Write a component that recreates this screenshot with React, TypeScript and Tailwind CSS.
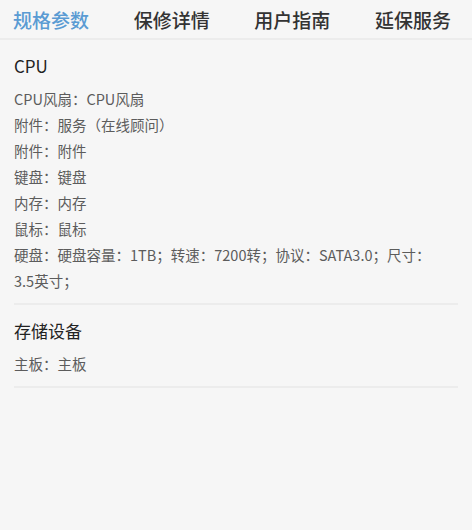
import React, { useState } from 'react'

const tabs = ['规格参数', '保修详情', '用户指南', '延保服务']

const sections = [
  {
    title: 'CPU',
    items: [
      ['CPU风扇：CPU风扇'],
      ['附件：服务（在线顾问）'],
      ['附件：附件'],
      ['键盘：键盘'],
      ['内存：内存'],
      ['鼠标：鼠标'],
      ['硬盘：硬盘容量：1TB；转速：7200转；协议：SATA3.0；尺寸：', '3.5英寸；'],
    ],
  },
  {
    title: '存储设备',
    items: [['主板：主板']],
  },
]

const App = () => {
  const [active, setActive] = useState(0)

  return (
    <div
      className="w-[472px] h-[530px] bg-[#f6f6f6] overflow-hidden"
      style={{ fontFamily: '"Noto Sans CJK SC", "Noto Sans", sans-serif' }}
    >
      {/* Tabs */}
      <div className="flex justify-between items-center h-[40px] pl-[13px] pr-[21px] border-b-2 border-[#ececec]">
        {tabs.map((t, i) => (
          <button
            key={t}
            onClick={() => setActive(i)}
            className={`text-[19px] leading-none font-medium ${i === active ? 'text-[#5a9bd3]' : 'text-[#333]'}`}
          >
            {t}
          </button>
        ))}
      </div>

      {/* Spec groups */}
      <div className="px-[14px]">
        {sections.map((s) => (
          <div key={s.title} className="pt-[13px] pb-[9px] border-b-2 border-[#ececec]">
            <div className="text-[17px] leading-[26px] text-[#222] mb-[7px]">{s.title}</div>
            {s.items.map((parts, i) => (
              <div key={i} className="text-[14.5px] leading-[26px] text-[#5c5c5c]">
                {parts[0]}
                {parts[1] && <span className="whitespace-nowrap inline-block">{parts[1]}</span>}
              </div>
            ))}
          </div>
        ))}
      </div>
    </div>
  )
}

export default App
